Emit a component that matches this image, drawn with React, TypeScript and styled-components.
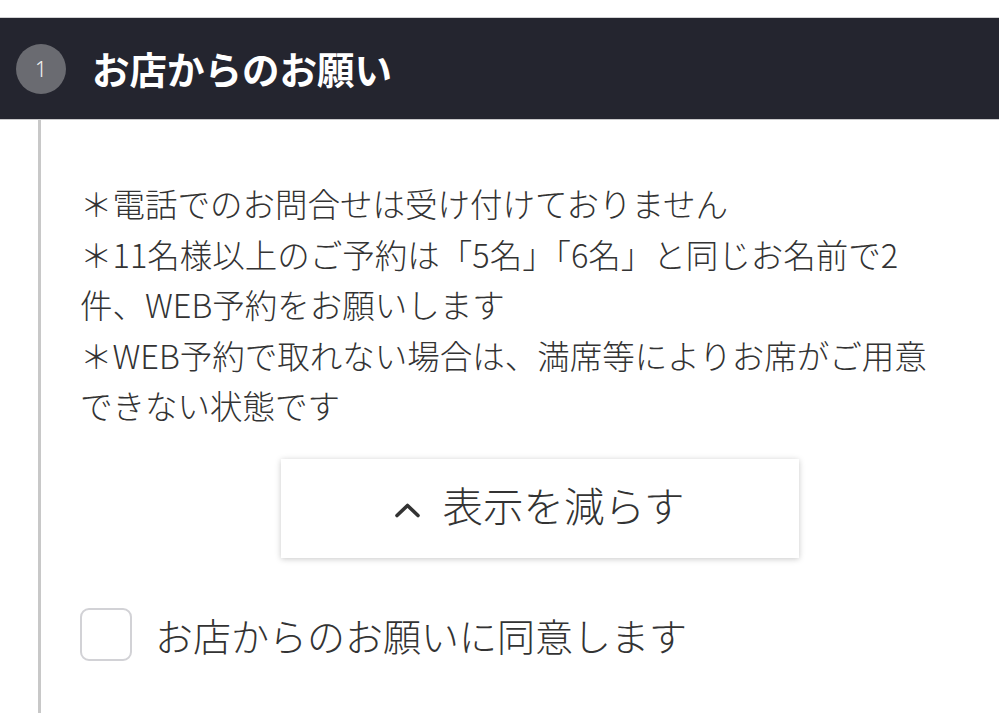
import React from "react";
import styled, { createGlobalStyle } from "styled-components";

const GlobalStyle = createGlobalStyle`
  html, body {
    margin: 0;
    padding: 0;
    background: #ffffff;
  }
  body {
    font-family: "Noto Sans CJK JP", "Noto Sans", sans-serif;
    color: #333333;
  }
`;

const Page = styled.div`
  padding-top: 17px;
  overflow: hidden;
  height: 696px;
`;

const Section = styled.section`
  display: flex;
  flex-direction: column;
`;

const Header = styled.header`
  display: flex;
  align-items: center;
  gap: 26px;
  height: 103px;
  box-sizing: border-box;
  padding-left: 16px;
  background: #24252f;
  border-top: 1px solid #d2d2d4;
  border-bottom: 1px solid #c9c9cb;
`;

const StepBadge = styled.span`
  display: flex;
  align-items: center;
  justify-content: center;
  width: 50px;
  height: 50px;
  border-radius: 50%;
  background: #6a6b71;
  color: #f2f2f2;
  font-family: "Noto Sans", sans-serif;
  font-size: 21px;
  font-weight: 300;
`;

const Title = styled.h2`
  margin: 0 0 2px 0;
  color: #ffffff;
  font-size: 37.5px;
  font-weight: 700;
`;

const Body = styled.div`
  margin-left: 38px;
  border-left: 3px solid #c8c8c8;
  padding: 58px 0 60px 39px;
  display: flex;
  flex-direction: column;
`;

const Notes = styled.div`
  padding-right: 40px;
  font-size: 32.5px;
  line-height: 50.5px;
  color: #333333;
  font-weight: 300;
`;

const Note = styled.p`
  margin: 0;
`;

const ToggleButton = styled.button`
  align-self: center;
  display: flex;
  align-items: center;
  justify-content: center;
  gap: 21px;
  width: 518px;
  height: 99px;
  margin: 28px 0 0 0;
  padding: 0 0 8px 0;
  border: none;
  background: #ffffff;
  box-shadow: 0 1px 6px rgba(0, 0, 0, 0.22);
  font-family: inherit;
  font-size: 40.5px;
  font-weight: 300;
  color: #333333;
  cursor: pointer;
`;

const Chevron = styled.svg`
  width: 27px;
  height: 16px;
  margin-top: 12px;
`;

const AgreeRow = styled.label`
  display: flex;
  align-items: center;
  gap: 23px;
  margin-top: 49px;
  font-size: 38px;
  font-weight: 300;
  color: #333333;
  cursor: pointer;
`;

const CheckBox = styled.span`
  width: 52px;
  height: 53px;
  box-sizing: border-box;
  border: 2px solid #d2d2d6;
  border-radius: 9px;
  background: #ffffff;
`;

export default function App() {
  return (
    <>
      <GlobalStyle />
      <Page>
        <Section>
          <Header>
            <StepBadge>1</StepBadge>
            <Title>お店からのお願い</Title>
          </Header>
          <Body>
            <Notes>
              <Note>＊電話でのお問合せは受け付けておりません</Note>
              <Note>＊11名様以上のご予約は「5名」「6名」と同じお名前で2件、WEB予約をお願いします</Note>
              <Note>＊WEB予約で取れない場合は、満席等によりお席がご用意できない状態です</Note>
            </Notes>
            <ToggleButton type="button">
              <Chevron viewBox="0 0 27 16" aria-hidden="true">
                <path
                  d="M3 13.5 L13.5 3.5 L24 13.5"
                  fill="none"
                  stroke="#333333"
                  strokeWidth="3.6"
                  strokeLinecap="round"
                  strokeLinejoin="round"
                />
              </Chevron>
              表示を減らす
            </ToggleButton>
            <AgreeRow>
              <CheckBox />
              お店からのお願いに同意します
            </AgreeRow>
          </Body>
        </Section>
      </Page>
    </>
  );
}
